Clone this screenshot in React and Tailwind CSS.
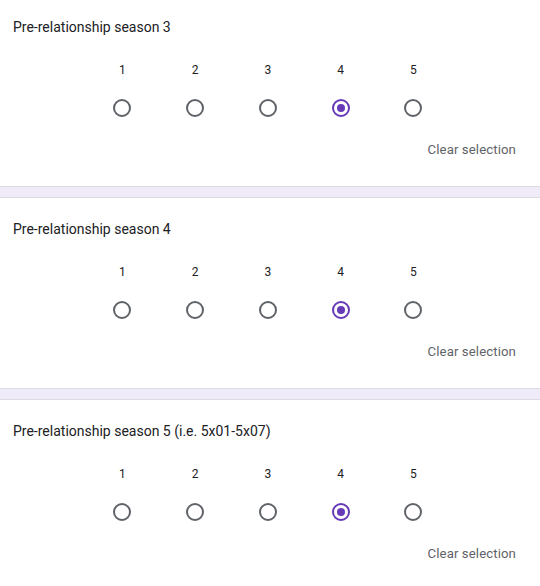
const questions = [
  "Pre-relationship season 3",
  "Pre-relationship season 4",
  "Pre-relationship season 5 (i.e. 5x01-5x07)",
]

const Radio = ({ checked }) => (
  <div
    className={`w-[18px] h-[18px] rounded-full border-2 flex items-center justify-center ${
      checked ? "border-[#673ab7]" : "border-[#5f6368]"
    }`}
  >
    {checked && <div className="w-[8px] h-[8px] rounded-full bg-[#673ab7]" />}
  </div>
)

const Question = ({ title }) => (
  <div className="h-[190px] bg-white flex flex-col">
    <p className="pt-[21px] pl-[13px] text-[14px] leading-5 text-[#202124]">{title}</p>
    <div className="flex pl-[86px] mt-[25px]">
      {[1, 2, 3, 4, 5].map((n) => (
        <div key={n} className="w-[72.75px] flex flex-col items-center">
          <span className="text-[12px] leading-4 text-[#202124]">{n}</span>
          <div className="mt-[21px]">
            <Radio checked={n === 4} />
          </div>
        </div>
      ))}
    </div>
    <div className="flex justify-end pr-6 mt-[23px]">
      <span className="text-[13.2px] leading-5 text-[#5f6368] tracking-[0.1px]">Clear selection</span>
    </div>
  </div>
)

export default function App() {
  return (
    <div
      className="w-[540px] h-[586px] overflow-hidden bg-white"
      style={{ fontFamily: "Roboto, 'Liberation Sans', sans-serif" }}
    >
      <div className="-mt-1">
        {questions.map((q, i) => (
          <div key={q}>
            <Question title={q} />
            {i < questions.length - 1 && (
              <div className="h-[12px] bg-[#efebf8] border-y border-[#dadce0]" />
            )}
          </div>
        ))}
      </div>
    </div>
  )
}
